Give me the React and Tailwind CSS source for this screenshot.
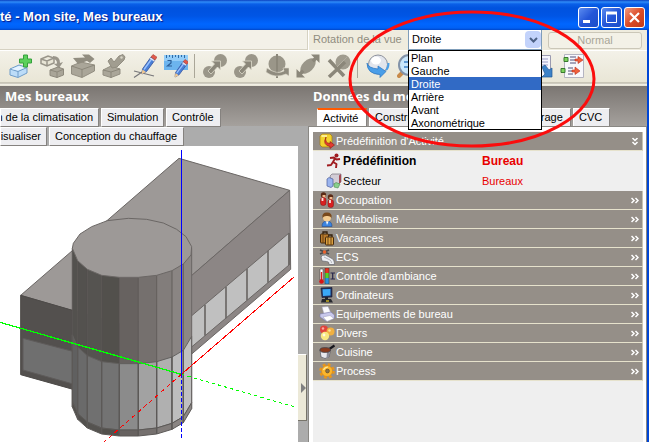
const TITLE_GRADIENT =
  'bg-[linear-gradient(180deg,#0a3fbf_0px,#2f8cf8_2px,#0a5fe8_4px,#0052de_8px,#0055e5_16px,#0066ff_24px,#0060f5_28px,#0046c8_30px)]';
const BAND_GRADIENT = 'bg-[linear-gradient(180deg,#7b7672,#a5a19d)]';

const Icon = ({ box, className = 'w-6 h-6', children }) => (
  <svg viewBox={box} className={`${className} block shrink-0`} aria-hidden="true">
    {children}
  </svg>
);

/* ---------- toolbar icons ---------- */

const BlockAdd = () => (
  <Icon box="0 0 24 24">
    <path d="M1 15 L10 11 L18 13.500 L18 19 L9 23.500 L1 21Z" fill="#bcdcf8" stroke="#6f9cc8" />
    <path d="M1 15 L9 17.500 L18 13.500 M9 17.500 V23" fill="none" stroke="#6f9cc8" />
    <path d="M2.500 15 L10 12 L16 13.700 L9 16.500Z" fill="#e6f3ff" />
    <path d="M14.500 1 H18.500 V5 H22.500 V9 H18.500 V13 H14.500 V9 H10.500 V5 H14.500Z" fill="#5cd05c" stroke="#35a03c" />
  </Icon>
);

const BlockCopy = () => (
  <Icon box="0 0 24 24">
    <path d="M1 5 L8 2 L14 4 L14 9 L7 12 L1 9.500Z M1 5 L7 7 L14 4 M7 7 V12" fill="#e8e5d6" stroke="#99958a" strokeWidth="1.500" />
    <path d="M13 2 Q20 2 20 9 L23 8 L19 14 L14 10 L17 9.500 Q17 5 13 5Z" fill="#99958a" />
    <path d="M10 16 L18 13 L23.500 15 V21 L17 23.500 L10 21.500Z" fill="#a9a598" stroke="#8d897c" />
    <path d="M10 16 L17 18 L24 15 M17 18 V24" fill="none" stroke="#8d897c" />
  </Icon>
);

const BlockStretch = () => (
  <Icon box="0 0 24 24">
    <path d="M0.500 12 L10 8 L23.500 11 V17 L11 23.500 L0.500 20Z" fill="#aaa699" stroke="#928e81" />
    <path d="M0.500 12 L11 15.500 L23.500 11 M11 15.500 V23" fill="none" stroke="#8b877a" />
    <path d="M2 4 L14 3.500 L11 0.500 L18 0.500 L23.500 5 L19 9 L16 7 L7 10Z" fill="#918d80" />
  </Icon>
);

const BlockCut = () => (
  <Icon box="0 0 24 24">
    <path d="M1 16 L9 12 L18 15 V20 L9 23.500 L1 21Z" fill="#aaa699" stroke="#928e81" />
    <path d="M1 16 L9 18 L18 15 M9 18 V24" fill="none" stroke="#8b877a" />
    <path d="M6 7 L9 4 L12 8 L17 2 L21 0.500 L23 3 L22 6 L15 13 L10 14Z" fill="#a19d90" stroke="#928e81" />
    <circle cx="19.500" cy="3.500" r="1.200" fill="#d8d5c6" />
  </Icon>
);

const Pencil = () => (
  <g>
    <path d="M9.500 15 L18 3 L22 6 L13.500 17.500 L9 20Z" fill="#4a80d8" stroke="#34509a" strokeWidth="0.800" />
    <path d="M11 15.500 L19 4.500" stroke="#9cc4ff" strokeWidth="1.300" />
    <path d="M18 3 L20 0.500 L24 3.200 L22 6Z" fill="#e25a4a" stroke="#a83c34" strokeWidth="0.600" />
    <path d="M17.200 4 L21.400 7" stroke="#e4e4ec" strokeWidth="1.500" />
    <path d="M9.500 15.500 L13 18 L8.500 20.500Z" fill="#f0c890" />
  </g>
);

const DrawLine = () => (
  <Icon box="0 0 24 24">
    <path d="M1 17 L21 22 M1 23.500 L12 16" stroke="#77777a" strokeWidth="1.200" fill="none" />
    <Pencil />
  </Icon>
);

const Measure = () => (
  <Icon box="0 0 24 24">
    <rect x="0" y="1" width="24" height="15" fill="#6cb4ee" />
    <rect x="0" y="1" width="24" height="6" fill="#94cdf8" />
    <path d="M2.500 1 V4 M5.500 1 V3 M8.500 1 V4 M11.500 1 V3 M14.500 1 V4 M17.500 1 V3 M20.500 1 V4" stroke="#2d6ca8" />
    <path d="M3.500 6.500 H7 V9 L3.500 12 H8" fill="none" stroke="#2c5f98" strokeWidth="1.200" />
    <g transform="translate(3 5) scale(.9)">
      <Pencil />
    </g>
  </Icon>
);

const MoveNode = () => (
  <Icon box="0 0 24 24">
    <circle cx="17.500" cy="6.500" r="6.500" fill="#9a9689" />
    <circle cx="6" cy="18" r="6" fill="#9a9689" />
    <path d="M5 17 L11.500 10 L8.500 7 H17.500 V16 L14.500 13 L8 20Z" fill="#8b877a" stroke="#dcd9ca" strokeWidth="0.800" />
  </Icon>
);

const RotateNode = () => (
  <Icon box="0 0 24 24">
    <circle cx="12" cy="10" r="8.500" fill="#9a9689" />
    <path d="M11 0 H13 V24 H11Z" fill="#8b877a" />
    <path d="M2 14 Q12 21 19 17 L18 14 H24 V22 L21 20 Q10 25 1 18Z" fill="#8f8b7e" stroke="#dcd9ca" strokeWidth="0.600" />
  </Icon>
);

const ScaleNode = () => (
  <Icon box="0 0 24 24">
    <ellipse cx="12" cy="12" rx="9.500" ry="5.500" transform="rotate(-45 12 12)" fill="#9a9689" />
    <path d="M15 0.500 H23.500 V9 L20.500 6 L18 8.500 L15.500 6 L18 3.500Z M9 23.500 H0.500 V15 L3.500 18 L6 15.500 L8.500 18 L6 20.500Z" fill="#8b877a" />
  </Icon>
);

const DeleteNode = () => (
  <Icon box="0 0 24 24">
    <circle cx="16" cy="8" r="7.500" fill="#a09c8f" />
    <path d="M2 6 L17 22 M18 8 L2 23" stroke="#8b877a" strokeWidth="3.500" />
    <path d="M10 13 L20 3" stroke="#b1ada0" strokeWidth="1" />
  </Icon>
);

const Orbit = () => (
  <Icon box="0 0 24 24">
    <circle cx="12" cy="10.500" r="9.500" fill="#e2e5ec" stroke="#8e929c" />
    <ellipse cx="10" cy="6.500" rx="5" ry="4" fill="#fff" />
    <path d="M1 9 Q2 14 12 15 L12 12 L20 17.500 L14 23.500 V20.500 Q1 20 1 9Z" fill="#4a9ee8" stroke="#2a74c0" strokeWidth="0.700" />
    <path d="M22.500 9 Q22.500 14 20 16" stroke="#4a9ee8" strokeWidth="2" fill="none" />
  </Icon>
);

const Magnify = () => (
  <Icon box="0 0 24 24">
    <path d="M7 17 L2 22" stroke="#c88a4a" strokeWidth="4" strokeLinecap="round" />
    <circle cx="12" cy="11" r="10" fill="#c9e6fb" stroke="#8292a8" strokeWidth="2" />
    <path d="M7 8 H18 M7 13 H18" stroke="#3d80c8" strokeWidth="1.500" />
  </Icon>
);

const ExportPage = () => (
  <Icon box="0 0 24 24">
    <path d="M3.500 1.500 H21.500 V22.500 H3.500Z" fill="#f5f5fc" stroke="#9a9ab0" />
    <path d="M6 5 H19 M6 8 H19 M6 11 H19" stroke="#9b9bc6" />
    <path d="M13 13 L16 11 L20 16 L23 14 V23 H13 L16 20Z" fill="#3d82c8" stroke="#245a96" strokeWidth="0.700" />
  </Icon>
);

const Mapping = () => (
  <Icon box="0 0 24 24">
    <path d="M4.500 0.500 H23.500 V23.500 H4.500Z" fill="#f8f8fc" stroke="#b4b4c0" />
    <path d="M4 3.500 H8 V7.500 H4Z M1 14.500 H5 V18.500 H1Z" fill="#7dd45c" stroke="#3a7a30" />
    <path d="M10 3 H16 M10 6 H17 M10 9 H16 M8 14 H13 M8 17 H14 M8 20 H13" stroke="#8888a4" strokeWidth="1.300" />
    <path d="M15 5 H18 V2.500 L23 6 L18 9.500 V7 H15Z M12 16 H15 V13 L20 17 L15 20.500 V18 H12Z" fill="#f0603c" stroke="#b83020" strokeWidth="0.600" />
  </Icon>
);

const toolGroups = [
  [
    ['Ajouter un bloc', BlockAdd],
    ['Copier', BlockCopy],
    ['Étirer', BlockStretch],
    ['Couper', BlockCut],
    ['Dessiner', DrawLine],
    ['Mesurer', Measure],
  ],
  [
    ['Déplacer', MoveNode],
    ['Dupliquer', MoveNode],
    ['Pivoter', RotateNode],
    ['Redimensionner', ScaleNode],
    ['Supprimer', DeleteNode],
  ],
  [
    ['Orbite', Orbit],
    ['Zoom', Magnify],
    ['Zoom avant', Magnify],
    ['Zoom arrière', Magnify],
    ['Zoom fenêtre', Magnify],
  ],
  [
    ['Exporter', ExportPage],
    ['Correspondance', Mapping],
  ],
];

/* ---------- category icons ---------- */

const small = 'w-4 h-4';

const TemplateIcon = () => (
  <Icon box="0 0 16 16" className={small}>
    <path d="M1 3 L3 1 H11 L13 3 V12 L11 14 H3 L1 12Z" fill="#f2d22c" stroke="#a07a14" strokeWidth="0.700" />
    <path d="M2.500 3 H8" stroke="#fff8b0" strokeWidth="1.500" />
    <path d="M7 4 Q5.500 10 11 10.500 V8.500 L15.500 12 L11 15.500 V13.500 Q3 12 7 4Z" fill="#e23b30" stroke="#8c1814" strokeWidth="0.600" />
  </Icon>
);

const RunnerIcon = () => (
  <Icon box="0 0 16 16" className={small}>
    <circle cx="10.500" cy="2.500" r="2" fill="#a01c20" />
    <path d="M4 5 L8 4.500 L10.500 6.500 L14 6 M9 5.500 L7 9 L10.500 11 L10 15 M7 9 L5 12 L1 12.500" stroke="#a01c20" strokeWidth="1.900" fill="none" strokeLinejoin="round" />
  </Icon>
);

const SectorIcon = () => (
  <Icon box="0 0 16 16" className={small}>
    <path d="M4 3 L6 1 H15 V9 L12 11 H6Z" fill="#d3cdd6" stroke="#77707c" strokeWidth="0.700" />
    <path d="M13 2.500 L15 1 V9 L13 11Z" fill="#a34a55" />
    <path d="M1 6 L3 4.500 L7 6 V13 L5 14.500 L1 13Z" fill="#9ab4ee" stroke="#4a5c9c" strokeWidth="0.700" />
    <path d="M8 11 L10 9.500 L14 11 L12 15 L8 14Z" fill="#8ad08c" stroke="#4a8850" strokeWidth="0.600" />
  </Icon>
);

const PeopleIcon = () => (
  <Icon box="0 0 16 16" className={small}>
    <circle cx="4.500" cy="3" r="2.700" fill="#5a2a16" />
    <path d="M3.500 3 H6.500 V6 H3.500Z" fill="#f2b88c" />
    <rect x="1.500" y="5.500" width="5.500" height="8" rx="2.500" fill="#d82020" stroke="#7c1414" strokeWidth="0.500" />
    <circle cx="11.500" cy="5" r="2.700" fill="#5a2a16" />
    <path d="M10.500 5 H13.500 V8 H10.500Z" fill="#f2b88c" />
    <rect x="9" y="7.500" width="5.500" height="8" rx="2.500" fill="#d82020" stroke="#7c1414" strokeWidth="0.500" />
    <path d="M3.500 6 V9 M11 8 V11" stroke="#f8e4e0" strokeWidth="1.800" />
  </Icon>
);

const PersonIcon = () => (
  <Icon box="0 0 16 16" className={small}>
    <path d="M3 15.500 Q3 10 8 10 Q13 10 13 15.500Z" fill="#3a84e0" stroke="#1e4c90" strokeWidth="0.600" />
    <circle cx="8" cy="6.500" r="4" fill="#f4cc90" />
    <path d="M3.500 7 Q2.500 1.500 8 1.500 Q13.500 1.500 12.500 7 Q11 4.500 8 5 Q5 4.500 3.500 7Z" fill="#7a4a1c" />
    <path d="M7 10.500 L8 14 L9.500 10.500Z" fill="#fff" />
  </Icon>
);

const LuggageIcon = () => (
  <Icon box="0 0 16 16" className={small}>
    <path d="M4 4 V2 H8 V4 M9 7 V5 H13 V7" fill="none" stroke="#33200c" strokeWidth="1.300" />
    <rect x="1.500" y="4" width="8" height="9" rx="1" fill="#b87a2c" stroke="#452a0c" />
    <rect x="6.500" y="7" width="8" height="8" rx="1" fill="#dba040" stroke="#452a0c" />
    <path d="M4 4 V13 M9 7 V15 M12 7 V15" stroke="#6b4414" />
  </Icon>
);

const TapIcon = () => (
  <Icon box="0 0 16 16" className={small}>
    <path d="M1 1 L10 5 M10 1 L1 5" stroke="#4a4a4a" strokeWidth="1.800" />
    <circle cx="5.500" cy="3" r="1.800" fill="#e8602c" />
    <path d="M2 8 Q3 5.500 6.500 6 L12 9 Q15.500 10 15.500 15.500 H10 Q10.500 12.500 7.500 12.500 L3 12Z" fill="#eceef2" stroke="#6e7076" strokeWidth="0.800" />
    <path d="M5 8 L11 11 Q12.500 12 12.500 14" fill="none" stroke="#b4b6bc" />
  </Icon>
);

const ComfortIcon = () => (
  <Icon box="0 0 16 16" className={small}>
    <path d="M1 1 H4 V12 H1Z" fill="#fff" stroke="#333" strokeWidth="0.500" />
    <path d="M2.500 4 V12" stroke="#e01818" strokeWidth="1.400" />
    <circle cx="2.500" cy="13.500" r="2.300" fill="#d81414" />
    <rect x="6" y="0" width="4" height="5" fill="#e83020" />
    <rect x="6" y="5" width="4" height="5" fill="#58d028" />
    <rect x="6" y="10" width="4" height="6" fill="#2890e0" />
    <path d="M6 0 H10 V16 H6Z" fill="none" stroke="#333" strokeWidth="0.500" />
    <path d="M11.500 5 H16 M11.500 11 H16 M13.700 5 V11" stroke="#26264c" strokeWidth="1.200" />
  </Icon>
);

const ComputerIcon = () => (
  <Icon box="0 0 16 16" className={small}>
    <path d="M2 1 L13 0.500 V10 L3 10.500Z" fill="#24305c" stroke="#141a30" strokeWidth="0.600" />
    <path d="M3.500 2.200 L11.500 2 V8.500 L4 9Z" fill="#3aa8f8" />
    <path d="M6 10 H9 V12 H6Z" fill="#22242a" />
    <path d="M3 12 H12 L14 15.500 H2Z" fill="#26282e" />
    <path d="M7 14 H10" stroke="#f0d020" strokeWidth="1.200" />
  </Icon>
);

const PrinterIcon = () => (
  <Icon box="0 0 16 16" className={small}>
    <path d="M3 1 L9 0.500 L12 7 L5 8Z" fill="#fbfbff" stroke="#a0a0c0" strokeWidth="0.500" />
    <path d="M1 8 L12 6 L15.500 9 V12 L7 15 L1 11Z" fill="#c8c8ec" stroke="#7878a8" strokeWidth="0.600" />
    <path d="M4 11 L11 9.500 L15 12.500 L8 15.500Z" fill="#fff" stroke="#9c9cbc" strokeWidth="0.500" />
  </Icon>
);

const BallsIcon = () => (
  <Icon box="0 0 16 16" className={small}>
    <circle cx="5" cy="4.500" r="4" fill="#e0443c" />
    <circle cx="11.500" cy="6.500" r="4" fill="#f0b040" />
    <circle cx="6" cy="11" r="4.200" fill="#f8e880" />
    <circle cx="4" cy="3.500" r="1.200" fill="#f8a8a0" />
    <circle cx="10.500" cy="5.500" r="1.200" fill="#fce0a0" />
    <circle cx="5" cy="10" r="1.400" fill="#fffbe0" />
  </Icon>
);

const PotIcon = () => (
  <Icon box="0 0 16 16" className={small}>
    <path d="M9 6 L15.500 1.500" stroke="#16161c" strokeWidth="2.200" />
    <path d="M1 6 L2 13 Q6 16 10 13 L11.500 6Z" fill="#e8e8ee" stroke="#50505a" strokeWidth="0.700" />
    <path d="M8 8 L7.500 14 Q10 13.500 10 12.500 L11 7Z" fill="#8c8c98" />
    <ellipse cx="6.200" cy="6" rx="5.300" ry="2.400" fill="#8a3a1c" stroke="#44444c" strokeWidth="0.800" />
  </Icon>
);

const GearIcon = () => (
  <Icon box="0 0 16 16" className={small}>
    <circle cx="8" cy="8" r="6.300" fill="none" stroke="#e8961c" strokeWidth="3" strokeDasharray="2.600 2.350" />
    <circle cx="8" cy="8" r="5.500" fill="#fbb62c" stroke="#d88414" strokeWidth="0.600" />
    <path d="M4.500 7 Q6 4 9 4" stroke="#ffe9a0" fill="none" strokeWidth="1.200" />
    <circle cx="8.500" cy="8" r="1.900" fill="#8c7448" stroke="#5c4420" strokeWidth="0.600" />
  </Icon>
);

const categories = [
  ['Occupation', PeopleIcon],
  ['Métabolisme', PersonIcon],
  ['Vacances', LuggageIcon],
  ['ECS', TapIcon],
  ["Contrôle d'ambiance", ComfortIcon],
  ['Ordinateurs', ComputerIcon],
  ['Equipements de bureau', PrinterIcon],
  ['Divers', BallsIcon],
  ['Cuisine', PotIcon],
  ['Process', GearIcon],
];

/* ---------- 3D model ---------- */

// front rim of the cylinder, left to right, with the shade of each facet
const rim = [
  [217, 325], [233, 362], [262, 388], [305, 406], [358, 412],
  [415, 412], [470, 406], [516, 392], [550, 372], [575, 330],
];
const wallShades = ['#53514e', '#53514e', '#555350', '#52504c', '#676260', '#75706e', '#827d7b', '#8a8583', '#8c8785'];
const glassShades = ['#606060', '#6a6a6a', '#707070', '#737373', '#8b8b8b', '#a2a2a2', '#b0b0b0', '#bdbdbd', '#c0c0c0'];

const facet = (i, from, to) => {
  const [x1, y1] = rim[i];
  const [x2, y2] = rim[i + 1];
  return `${x1},${y1 + from} ${x2},${y2 + from} ${x2},${y2 + to} ${x1},${y1 + to}`;
};

const Model = () => (
  <svg viewBox="0 18 894 888" className="block w-[298px] h-[296px]" role="img" aria-label="Modèle 3D">
    <g stroke="#6b6765" strokeWidth="3" strokeLinejoin="round">
      <polygon points="62,466 537,55 869,151 394,564" fill="#9d9997" />
      <polygon points="394,564 869,151 872,388 394,797" fill="#8c8685" />
      <polygon points="62,466 394,562 394,797 62,704" fill="#53504e" stroke="#4d4a48" />
      <polygon points="69,595 394,680 394,781 69,690" fill="#6f6f6f" stroke="#5e5b5a" />
      <polygon points="500,591 867,279 867,375 500,684" fill="#c0c0c0" />
    </g>
    <g stroke="#6b6765" strokeWidth="5">
      <path d="M615 494 V587 M678 440 V535 M741 386 V481 M804 332 V428 M867 279 V375" />
    </g>
    {wallShades.map((shade, i) => (
      <g key={i}>
        <polygon points={facet(i, 0, 259)} fill={shade} stroke={shade} />
        <polygon points={facet(i, 259, 458)} fill={glassShades[i]} stroke="#62605e" strokeWidth="3" />
        <polygon points={facet(i, 458, 476)} fill={shade} stroke="#5c5957" strokeWidth="3" />
        <path d={`M${rim[i][0]} ${rim[i][1]} V${rim[i][1] + 259}`} stroke="#5c5856" strokeWidth="2.500" />
        <path d={`M${rim[i][0]} ${rim[i][1] + 259} V${rim[i][1] + 476}`} stroke="#5c5957" strokeWidth="4" />
      </g>
    ))}
    <path d="M575 325 V806" stroke="#6b6765" strokeWidth="3" />
    <polygon
      points="217,325 233,362 262,388 305,406 358,412 415,412 470,406 516,392 550,372 573,345 575,320 558,290 530,268 490,249 440,238 385,235 322,242 275,260 240,282 220,310"
      fill="#9d9997"
      stroke="#6b6765"
      strokeWidth="3"
    />
    <g fill="none" strokeWidth="3" shapeRendering="crispEdges">
      <path d="M0 547 L544 703" stroke="#00ff00" strokeWidth="4" />
      <path d="M544 703 L882 800" stroke="#00ff00" strokeDasharray="10 9" />
      <path d="M544 703 L882 411" stroke="#ff0000" />
      <path d="M544 703 L312 906" stroke="#ff0000" strokeDasharray="13 10" />
      <path d="M544.500 30 V703" stroke="#0000ff" />
      <path d="M544.500 703 V900" stroke="#0000ff" strokeDasharray="10 8" />
    </g>
  </svg>
);

/* ---------- window parts ---------- */

const WindowButton = ({ label, className, children }) => (
  <button
    aria-label={label}
    className={`w-[21px] h-[21px] rounded-[3px] border border-white flex items-center justify-center ${className}`}
  >
    <svg viewBox="0 0 17 17" className="w-[17px] h-[17px]" fill="none" stroke="#fff">
      {children}
    </svg>
  </button>
);

const TitleBar = () => (
  <header className={`h-[30px] shrink-0 flex items-center justify-between pr-1 pt-1 ${TITLE_GRADIENT}`}>
    <h1 className="text-[13px] leading-4 font-bold text-white [text-shadow:1px_1px_1px_#0a1883]">
      té - Mon site, Mes bureaux
    </h1>
    <div className="flex gap-0.5">
      <WindowButton label="Réduire" className="bg-[linear-gradient(135deg,#5c8cf0,#2456d8_50%,#1c4fc8)]">
        <path d="M3 12.500 H10" strokeWidth="3" />
      </WindowButton>
      <WindowButton label="Agrandir" className="bg-[linear-gradient(135deg,#5c8cf0,#2456d8_50%,#1c4fc8)]">
        <path d="M3.500 4 V13.500 H13.500 V4" />
        <path d="M3 4 H14" strokeWidth="3" />
      </WindowButton>
      <WindowButton label="Fermer" className="bg-[linear-gradient(135deg,#f09a80,#dc4c28_50%,#c03a18)]">
        <path d="M4 4 L13 13 M13 4 L4 13" strokeWidth="2.200" />
      </WindowButton>
    </div>
  </header>
);

const views = ['Plan', 'Gauche', 'Droite', 'Arrière', 'Avant', 'Axonométrique'];

const ViewBar = () => (
  <div className="h-5 shrink-0 flex bg-[#efecde]">
    <div className="w-[308px] shrink-0 bg-[#f3f1e8] border-r border-b border-[#d6d2c2]" />
    <div className="flex-1 flex items-stretch border-l border-white">
      <label htmlFor="view" className="w-[99px] shrink-0 pl-1 leading-[19px] text-[#8f8c80]">
        Rotation de la vue
      </label>
      <div className="relative w-[134px] shrink-0">
        <select
          id="view"
          defaultValue="Droite"
          className="block w-full h-5 appearance-none bg-white border border-[#7f9db9] border-t-0 pl-[3px] text-black"
        >
          {views.map((view) => (
            <option key={view}>{view}</option>
          ))}
        </select>
        <span className="absolute right-px top-px w-4 h-[17px] rounded-sm bg-[#c3d3fb] flex items-center justify-center pointer-events-none">
          <svg viewBox="0 0 9 6" className="w-[9px] h-1.5" fill="none" stroke="#4d6185" strokeWidth="2">
            <path d="M1 1 L4.500 4.500 L8 1" />
          </svg>
        </span>
        <ul role="listbox" aria-label="Vues" className="absolute z-10 left-0 top-5 w-full border border-black bg-white">
          {views.map((view) => (
            <li
              key={view}
              role="option"
              aria-selected={view === 'Droite'}
              className={`h-[13px] leading-[15px] pl-0.5 ${view === 'Droite' ? 'bg-[#316ac5] text-white' : 'text-black'}`}
            >
              {view}
            </li>
          ))}
        </ul>
      </div>
      <button disabled className="ml-1.5 mt-0.5 mb-px w-[94px] rounded-[3px] border border-[#cbc7b8] bg-[#f3f1e7] leading-[15px] text-[#a9a698]">
        Normal
      </button>
    </div>
  </div>
);

const Toolbar = () => (
  <div className="h-9 shrink-0 flex items-start pl-[5px] pt-[3px] border-t border-white bg-[linear-gradient(180deg,#f3f1e8_0px,#e9e6d6_31px,#a8a496_32px,#f5f3ea_33px,#dedac9_36px)]">
    {toolGroups.map((group, i) => (
      <div key={i} className="flex">
        {i > 0 && <span className="w-px h-6 ml-[3px] mr-1 bg-[#aaa698]" />}
        {group.map(([label, Glyph]) => (
          <button key={label} aria-label={label} className="w-[31px] h-6 flex justify-center">
            <Glyph />
          </button>
        ))}
      </div>
    ))}
  </div>
);

const Tab = ({ className = '', children }) => (
  <button
    role="tab"
    className={`h-[19px] shrink-0 px-[5px] leading-[17px] whitespace-nowrap text-left bg-[#eeeef1] border border-[#85827f] border-l-white border-t-white ${className}`}
  >
    {children}
  </button>
);

const LeftPane = () => (
  <section className="w-[308px] shrink-0 flex flex-col bg-[#acacac]">
    <div className={`h-10 shrink-0 ${BAND_GRADIENT}`}>
      <h2 className="h-[22px] pl-[5px] leading-5 font-['Noto_Sans'] text-[13px] font-bold text-white">Mes bureaux</h2>
      <div role="tablist" className="flex gap-0.5">
        <Tab className="w-[99px] flex justify-end overflow-hidden">n de la climatisation</Tab>
        <Tab className="w-[63px]">Simulation</Tab>
        <Tab className="w-[55px]">Contrôle</Tab>
      </div>
    </div>
    <div role="tablist" className="h-5 shrink-0 flex items-end gap-0.5">
      <Tab className="w-[47px] flex justify-end overflow-hidden">isualiser</Tab>
      <Tab className="w-[135px]">Conception du chauffage</Tab>
    </div>
    <div className="flex-1 flex">
      <div className="flex-1 bg-white">
        <Model />
      </div>
      <div className="w-2.5 pt-[208px]">
        <button
          aria-label="Replier le panneau"
          className="w-[9px] h-[67px] flex items-center justify-end bg-[#ece9d8] border-r border-b border-[#77746a] border-t border-t-white"
        >
          <svg viewBox="0 0 5 10" className="w-[5px] h-2.5">
            <path d="M0 0 L5 5 L0 10Z" fill="#808080" />
          </svg>
        </button>
      </div>
    </div>
  </section>
);

const Chevrons = ({ open }) => (
  <svg
    viewBox="0 0 8 7"
    className={`w-2 h-[7px] ml-auto mr-[3px] ${open ? 'rotate-90' : ''}`}
    fill="none"
    stroke="#fff"
    strokeWidth="1.500"
  >
    <path d="M0.500 1 L3 3.500 L0.500 6 M4.500 1 L7 3.500 L4.500 6" />
  </svg>
);

const CategoryRow = ({ label, icon: Glyph, open = false }) => (
  <button
    aria-expanded={open}
    className="w-full h-[19px] flex items-center gap-px pl-1.5 text-left text-white bg-[#958f88] border-b border-b-[#e6e2cc] border-r border-r-[#c8c4b2]"
  >
    <Glyph />
    <span>{label}</span>
    <Chevrons open={open} />
  </button>
);

const PropertyRow = ({ label, value, icon: Glyph, className = '' }) => (
  <div className={`h-5 flex items-center ${className}`}>
    <dt className="w-[169px] shrink-0 flex items-center gap-px pl-[13px]">
      <Glyph />
      {label}
    </dt>
    <dd className="text-[#e80000]">{value}</dd>
  </div>
);

const RightPane = () => (
  <section className="flex-1 min-w-0 flex flex-col">
    <div className={`h-10 shrink-0 ${BAND_GRADIENT}`}>
      <h2 className="h-[22px] pl-[5px] leading-5 font-['Noto_Sans'] text-[13px] font-bold text-white">Données du modèle</h2>
      <div role="tablist" className="flex gap-0.5 pl-[9px]">
        <Tab className="w-[50px] bg-white !border-t-2 !border-t-[#ff5a00] border-b-white !leading-4">Activité</Tab>
        <Tab className="w-[140px]">Construction</Tab>
        <Tab className="w-[60px]">Eclairage</Tab>
        <Tab className="w-[37px]">CVC</Tab>
      </div>
    </div>
    <div className="flex-1 flex flex-col bg-white border-l border-t border-r border-[#8a8884] pl-1 pr-[3px] pt-[5px]">
      <div className="flex-1 bg-[#efefef]">
        <CategoryRow label="Prédéfinition d'Activité" icon={TemplateIcon} open />
        <dl>
          <PropertyRow label="Prédéfinition" value="Bureau" icon={RunnerIcon} className="text-[12px] font-bold" />
          <PropertyRow label="Secteur" value="Bureaux" icon={SectorIcon} />
        </dl>
        {categories.map(([label, icon]) => (
          <CategoryRow key={label} label={label} icon={icon} />
        ))}
      </div>
    </div>
  </section>
);

export default function App() {
  return (
    <div className="relative min-h-screen flex flex-col overflow-hidden bg-[#0046d5] font-['Liberation_Sans',sans-serif] text-[11px] text-black">
      <TitleBar />
      <main className="flex-1 flex flex-col mr-0.5">
        <ViewBar />
        <Toolbar />
        <div className="flex-1 flex">
          <LeftPane />
          <RightPane />
        </div>
      </main>
      <svg viewBox="0 0 248 138" className="absolute z-20 left-[348px] top-[10px] w-[248px] h-[138px] pointer-events-none">
        <ellipse cx="124" cy="69" rx="122" ry="67" fill="none" stroke="#fb0d0d" strokeWidth="3" />
      </svg>
    </div>
  );
}
